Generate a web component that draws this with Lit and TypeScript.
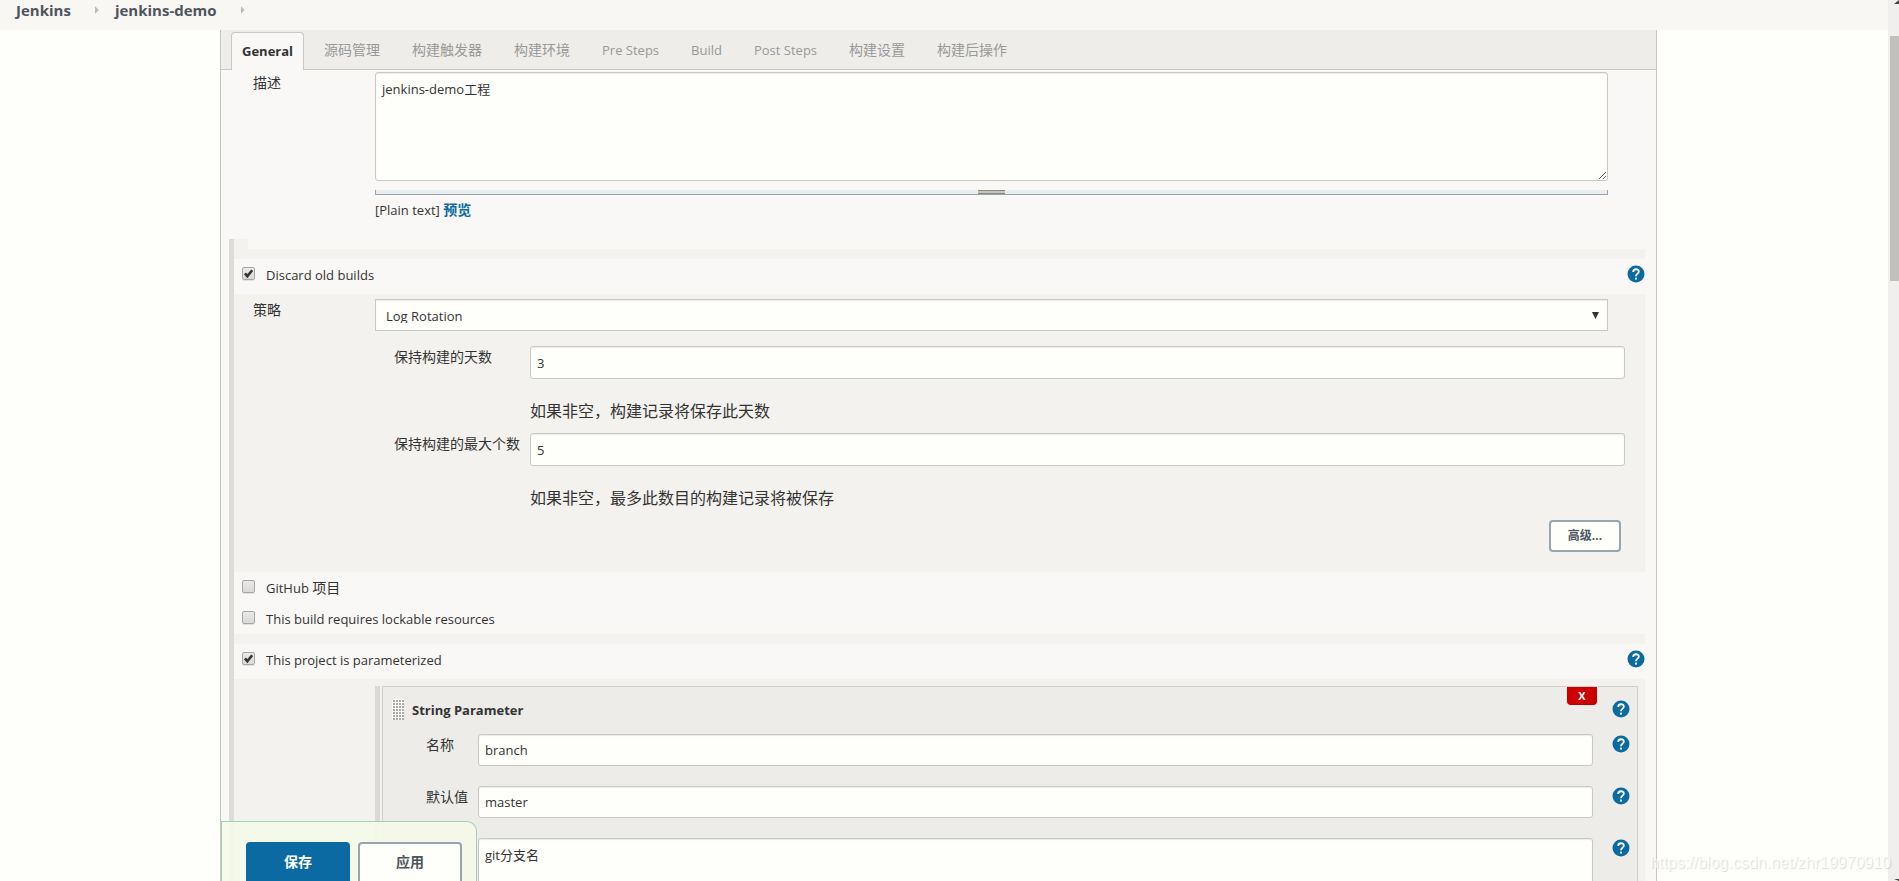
import { LitElement, html, css } from "lit";
import { customElement, property } from "lit/decorators.js";

@customElement("help-link")
class HelpLink extends LitElement {
  static styles = css`
    :host { display: block; width: 18px; height: 18px; }
    .link { display: block; height: 18px; }
    .icon { display: block; }
  `;
  render() {
    return html`<a class="link" href="#help" aria-label="Help"><svg class="icon" width="18" height="18" viewBox="0 0 18 18">
      <circle cx="9" cy="9" r="8.5" fill="#0b6aa2" />
      <path d="M6.2 7 C6.2 3.4 11.8 3.4 11.8 6.5 C11.8 8.6 9 8.6 9 11.2" fill="none" stroke="#fff" stroke-width="1.8" />
      <rect x="8" y="12.6" width="2" height="2" fill="#e4eff5" />
    </svg></a>`;
  }
}

@customElement("option-row")
class OptionRow extends LitElement {
  @property() label = "";
  @property() suffix = "";
  @property({ type: Boolean }) checked = false;
  @property({ type: Boolean }) tall = false;

  static styles = css`
    :host { display: block; background: #f9f8f6; }
    .row { display: flex; align-items: flex-start; padding-left: 8px; height: 31px; }
    .tall { height: 35px; }
    .box {
      appearance: none; box-sizing: border-box; width: 13px; height: 13px; margin: 8px 11px 0 0;
      border: 1px solid #a6a6a4; border-radius: 2px;
      background: linear-gradient(#e9e9e7, #d9d9d7); box-shadow: 0 1px 0 #e2e1df;
    }
    .box:checked {
      background: url("data:image/svg+xml,%3Csvg xmlns='http://www.w3.org/2000/svg' viewBox='0 0 11 11'%3E%3Cpath d='M2 5.4 4.3 8.2 9.2 2.2' fill='none' stroke='%23333' stroke-width='2.6'/%3E%3C/svg%3E"),
        linear-gradient(#e9e9e7, #d9d9d7);
    }
    .text { flex: 1; line-height: 20px; padding-top: 6px; }
    .cjk { font-size: 14px; }
    .help { margin-top: 6px; }
  `;
  render() {
    return html`<div class="row ${this.tall ? "tall" : ""}">
      <input class="box" id="box" type="checkbox" .checked=${this.checked} />
      <label class="text" for="box">${this.label} <span class="cjk">${this.suffix}</span></label>
      ${this.tall ? html`<help-link class="help"></help-link>` : ""}
    </div>`;
  }
}

@customElement("app-root")
class AppRoot extends LitElement {
  private tabs = ["源码管理", "构建触发器", "构建环境", "Pre Steps", "Build", "Post Steps", "构建设置", "构建后操作"];

  static styles = css`
    :host {
      display: block; position: relative; height: 100vh; overflow: hidden;
      background: #fefefb; color: #333;
      font: 13px/20px "Open Sans", "Noto Sans CJK SC", sans-serif;
    }
    * { box-sizing: border-box; }
    .crumbs {
      display: flex; align-items: center; height: 30px; padding: 0 16px 10px;
      background: #f8f7f4; font-size: 15px; font-weight: 700;
    }
    .crumb { color: #4d545d; text-decoration: none; }
    .arrow { flex: none; width: 4px; height: 8px; margin: 0 16px 0 24px; background: #bbb; clip-path: polygon(0 0, 100% 50%, 0 100%); }
    .screen { display: flex; flex-direction: column; height: 100vh; margin-right: 11px; }
    .panel {
      flex: 1; min-height: 0; overflow: hidden; margin: 0 231px 0 220px;
      border: 1px solid #c6c6c4; border-width: 0 1px; background: #f9f8f6;
    }
    .tabs {
      display: flex; align-items: flex-end; height: 40px; padding-left: 10px;
      background: #eeedea; border-bottom: 1px solid #c8c8c6; color: #999;
    }
    .tab {
      font: inherit; color: inherit; background: none; border: 1px solid transparent; border-bottom: 0;
      height: 37px; padding: 0 15px 2px; line-height: 34px;
    }
    .cjk { font-size: 14px; }
    .active {
      height: 38px; padding: 0 10px 2px; margin: 0 4px -1px 0; border-color: #c8c8c6; border-radius: 4px 4px 0 0;
      background: #f9f8f6; color: #333; font-weight: 700;
    }
    .field { font: inherit; color: #333; background: #fefefb; border: 1px solid #c8c8c6; border-radius: 3px; box-shadow: inset 0 1px 1px #ecebe9; width: 100%; display: block; }
    .line { height: 33px; padding: 0 6px; }
    .desc { display: grid; grid-template-columns: 122px 1fr; padding: 2px 48px 0 32px; height: 169px; }
    .label { font-size: 14px; line-height: 22px; }
    .area { height: 109px; padding: 7px 6px; line-height: 18px; resize: both; }
    .grip { display: flex; justify-content: center; height: 5px; margin-top: 9px; background: #e9edee; border: 1px solid #98a5b0; border-top: 0; }
    .grip-bar { width: 27px; height: 4px; border: 1px solid #888a80; border-width: 1px 0; background: #c4c5bd; }
    .note { margin-top: 5px; }
    .link { color: #0b6aa2; font-weight: 700; text-decoration: none; font-size: 14px; }
    .options { margin: 0 11px 0 8px; border-left: 5px solid #dddcd9; background: #f3f2ef; }
    .notch { height: 10px; margin: 0 -11px 0 14px; background: #f9f8f6; }
    .band { height: 10px; }
    .rotation { padding: 5px 0 0 19px; height: 278px; }
    .strategy { display: grid; grid-template-columns: 122px 1fr; padding-right: 37px; }
    .select-wrap { position: relative; }
    .select { appearance: none; height: 32px; border-radius: 0; padding: 9px 10px 7px; line-height: 14px; }
    .down { position: absolute; right: 9px; top: 13px; width: 7px; height: 7px; background: #333; clip-path: polygon(0 0, 100% 0, 50% 100%); pointer-events: none; }
    .limits { display: grid; grid-template-columns: 136px 1fr; margin: 15px 20px 0 141px; grid-auto-rows: 87px; }
    .hint { margin-top: 20px; font-size: 16px; line-height: 24px; }
    .actions { display: flex; justify-content: flex-end; padding-right: 24px; }
    .btn {
      font: inherit; font-weight: 700; color: #4d545d; background: #fefefb; border: 2px solid #98a5b0; border-radius: 4px;
    }
    .more { width: 72px; height: 32px; font-size: 12px; line-height: 28px; padding: 0; }
    .params { display: flex; gap: 2px; height: 400px; padding: 7px 7px 0 141px; }
    .bar { width: 5px; background: #dad9d6; }
    .card { flex: 1; border: 1px solid #d0cfcd; background: #edece9; padding: 0 7px 0 9px; }
    .head { display: flex; height: 47px; }
    .drag {
      width: 12px; height: 21px; margin: 12px 8px 0 0; background-color: #fefefb;
      background-image: radial-gradient(circle at 2px 2px, #aaa 1px, transparent 1px); background-size: 3px 3px;
    }
    .title { flex: 1; font-weight: 700; padding-top: 13px; line-height: 20px; }
    .close {
      width: 30px; height: 18px; padding: 0; margin-right: 15px; border: 1px solid #b00; border-top: 0; border-radius: 0 0 4px 4px;
      background: #c00; color: #fff; font: inherit; font-size: 11px; font-weight: 700; line-height: 16px;
    }
    .top-help { margin-top: 13px; }
    .rows { display: grid; grid-template-columns: 52px 1fr 18px; margin-left: 34px; grid-auto-rows: 52px; }
    .rows .field { width: auto; margin-right: 19px; }
    .rows .line { height: 32px; }
    .side-help { margin-top: 1px; }
    .rows .last { height: 80px; padding: 6px; resize: none; }
    .save {
      position: absolute; left: 221px; bottom: 0; display: flex; gap: 8px; width: 256px; height: 60px; padding: 20px 14px 0 24px;
      border: 1px solid #a9cdb8; border-bottom: 0; border-radius: 0 10px 0 0; background: rgba(245, 249, 232, 0.9);
    }
    .big { flex: 1; height: 44px; padding: 0 0 4px; font-size: 14px; line-height: 36px; }
    .primary { background: #0b6aa2; border-color: #0b6aa2; color: #fff; }
    .scroll { position: absolute; right: 0; top: 0; bottom: 0; width: 11px; padding: 36px 0 0 2px; background: #f0efed; }
    .thumb { height: 245px; background: #c1c0bd; }
    .up, .foot { position: absolute; right: 0; background: #444; }
    .up { top: 0; width: 5px; height: 4px; clip-path: polygon(100% 0, 100% 100%, 0 100%); }
    .foot { bottom: 0; width: 5px; height: 2px; clip-path: polygon(0 0, 100% 0, 100% 100%); }
    .mark {
      position: absolute; right: 8px; bottom: 6px; font: 16px/24px "Liberation Sans", sans-serif;
      color: rgba(255, 255, 255, 0.8); text-shadow: 1px 1px 1px rgba(0, 0, 0, 0.14);
    }
  `;

  render() {
    return html`
      <div class="screen">
        <nav class="crumbs">
          <a class="crumb" href="#jenkins">Jenkins</a><span class="arrow"></span>
          <a class="crumb" href="#demo">jenkins-demo</a><span class="arrow"></span>
        </nav>
        <main class="panel">
          <div class="tabs">
            <button class="tab active">General</button>
            ${this.tabs.map((t) => html`<button class="tab ${t.charCodeAt(0) > 255 ? "cjk" : ""}">${t}</button>`)}
          </div>
          <section class="desc">
            <label class="label" for="desc">描述</label>
            <div>
              <textarea class="field area" id="desc" .value=${"jenkins-demo工程"}></textarea>
              <div class="grip"><span class="grip-bar"></span></div>
              <div class="note">[Plain text] <a class="link" href="#preview">预览</a></div>
            </div>
          </section>
          <section class="options">
            <div class="notch"></div>
            <div class="band"></div>
            <option-row label="Discard old builds" checked tall></option-row>
            <div class="rotation">
              <div class="strategy">
                <label class="label" for="strategy">策略</label>
                <div class="select-wrap">
                  <select class="field select" id="strategy"><option>Log Rotation</option></select>
                  <span class="down"></span>
                </div>
              </div>
              <div class="limits">
                <label class="label" for="days">保持构建的天数</label>
                <div><input class="field line" id="days" value="3" /><div class="hint">如果非空，构建记录将保存此天数</div></div>
                <label class="label" for="max">保持构建的最大个数</label>
                <div><input class="field line" id="max" value="5" /><div class="hint">如果非空，最多此数目的构建记录将被保存</div></div>
              </div>
              <div class="actions"><button class="btn more">高级...</button></div>
            </div>
            <option-row label="GitHub" suffix="项目"></option-row>
            <option-row label="This build requires lockable resources"></option-row>
            <div class="band"></div>
            <option-row label="This project is parameterized" checked tall></option-row>
            <div class="params">
              <div class="bar"></div>
              <div class="card">
                <div class="head">
                  <span class="drag"></span>
                  <div class="title">String Parameter</div>
                  <button class="close">X</button>
                  <help-link class="top-help"></help-link>
                </div>
                <div class="rows">
                  <label class="label" for="name">名称</label>
                  <input class="field line" id="name" value="branch" /><help-link class="side-help"></help-link>
                  <label class="label" for="value">默认值</label>
                  <input class="field line" id="value" value="master" /><help-link class="side-help"></help-link>
                  <label class="label" for="info">描述</label>
                  <textarea class="field last" id="info" .value=${"git分支名"}></textarea><help-link class="side-help"></help-link>
                </div>
              </div>
            </div>
          </section>
        </main>
      </div>
      <div class="save">
        <button class="btn big primary">保存</button>
        <button class="btn big">应用</button>
      </div>
      <div class="scroll"><div class="thumb"></div><span class="up"></span><span class="foot"></span></div>
      <div class="mark">https://blog.csdn.net/zhr19970910</div>
    `;
  }
}
